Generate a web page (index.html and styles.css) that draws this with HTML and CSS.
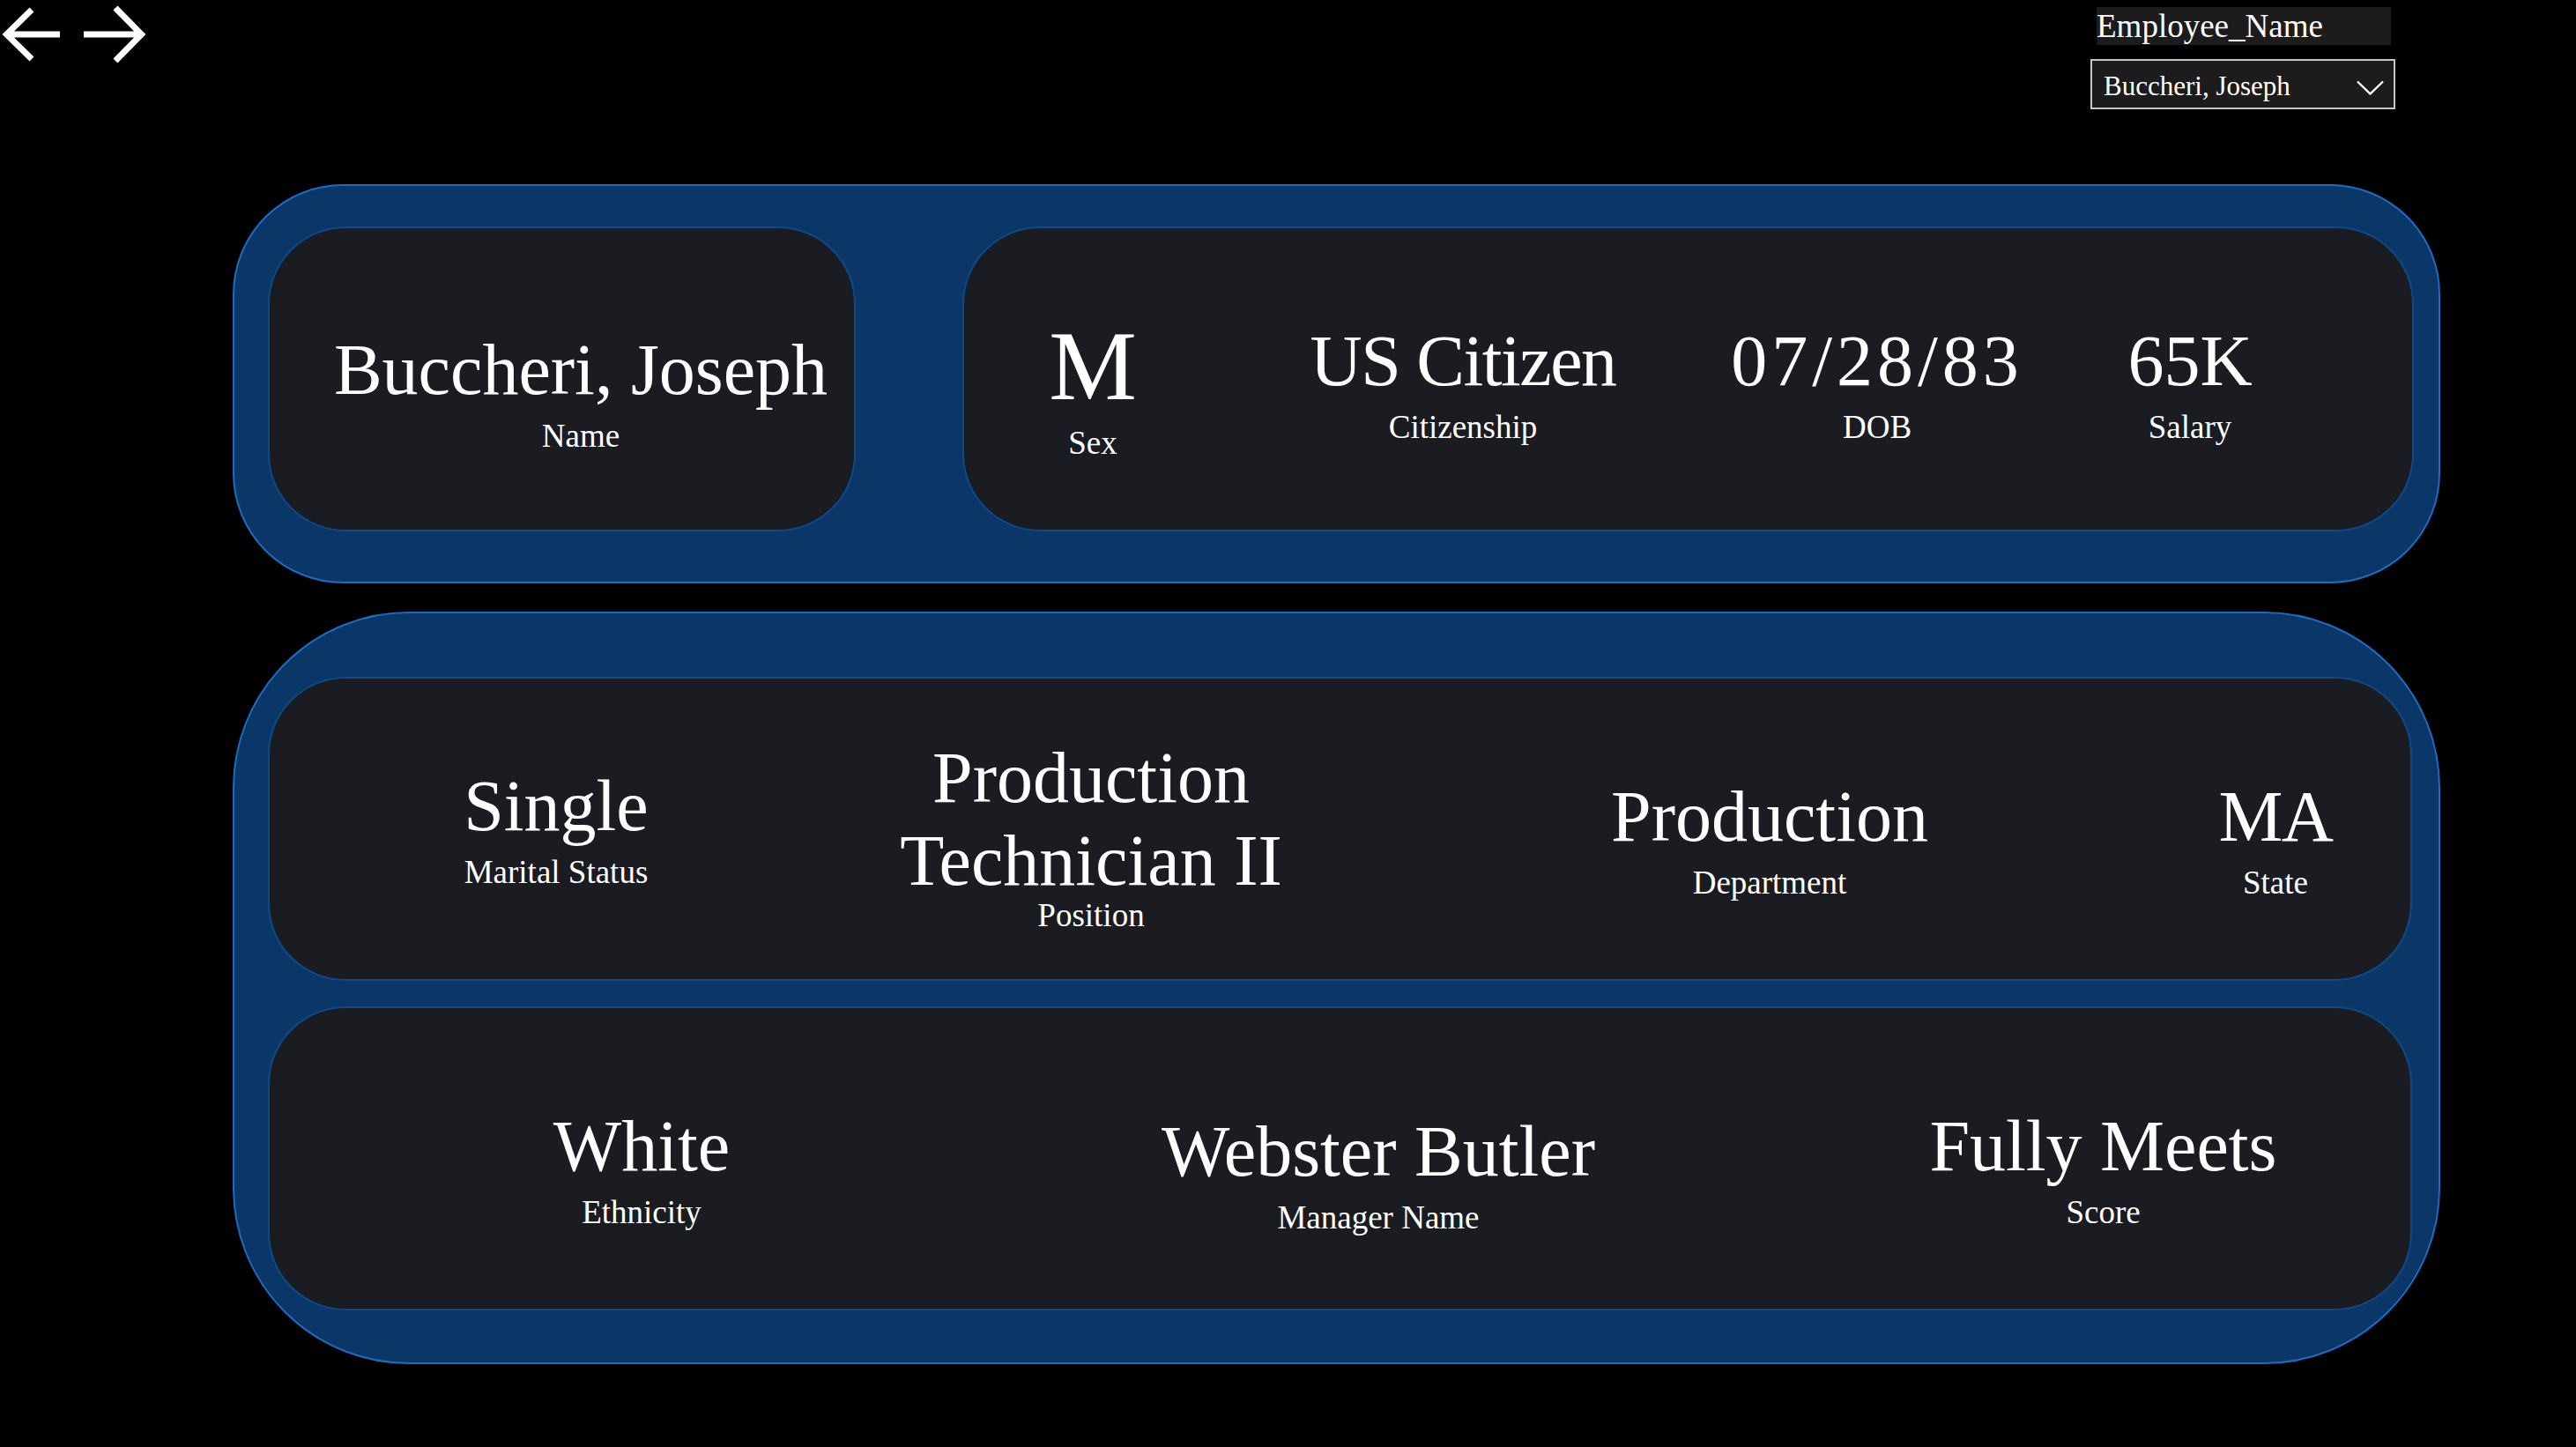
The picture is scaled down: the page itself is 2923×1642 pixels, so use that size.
FILE: index.html
```html
<!DOCTYPE html>
<html lang="en">
<head>
<meta charset="utf-8">
<title>Employee Details</title>
<link rel="stylesheet" href="styles.css">
</head>
<body>
<div class="page">
  <header class="topbar">
    <nav class="nav">
      <svg class="arrow arrow-back" viewBox="0 0 70 70" aria-label="Back">
        <path d="M66 35 H6 M34 7 L5.5 35 L34 63" fill="none" stroke="#fff" stroke-width="7"/>
      </svg>
      <svg class="arrow arrow-fwd" viewBox="0 0 74 70" aria-label="Forward">
        <path d="M3 35 H66 M39 5 L68.5 35 L39 65" fill="none" stroke="#fff" stroke-width="7"/>
      </svg>
    </nav>
    <div class="slicer">
      <div class="slicer-title">Employee_Name</div>
      <div class="slicer-box">
        <span class="slicer-value">Buccheri, Joseph</span>
        <svg class="chevron" viewBox="0 0 31 17"><path d="M1 1.5 L15.5 15.5 L30 1.5" fill="none" stroke="#fff" stroke-width="2.4"/></svg>
      </div>
    </div>
  </header>

  <main class="main">
    <section class="panel panel-top">
      <div class="card card-name">
        <div class="stat">
          <div class="value">Buccheri, Joseph</div>
          <div class="label">Name</div>
        </div>
      </div>
      <div class="card card-info">
        <div class="stat stat-sex">
          <div class="value value-xl">M</div>
          <div class="label label-xl">Sex</div>
        </div>
        <div class="stat">
          <div class="value value-tight">US Citizen</div>
          <div class="label">Citizenship</div>
        </div>
        <div class="stat">
          <div class="value value-date">07/28/83</div>
          <div class="label">DOB</div>
        </div>
        <div class="stat">
          <div class="value">65K</div>
          <div class="label">Salary</div>
        </div>
      </div>
    </section>

    <section class="panel panel-bottom">
      <div class="card card-row card-row1">
        <div class="stat">
          <div class="value">Single</div>
          <div class="label">Marital Status</div>
        </div>
        <div class="stat stat-position">
          <div class="value value-wrap">Production Technician II</div>
          <div class="label label-tight">Position</div>
        </div>
        <div class="stat nudge">
          <div class="value">Production</div>
          <div class="label">Department</div>
        </div>
        <div class="stat nudge">
          <div class="value value-tight">MA</div>
          <div class="label">State</div>
        </div>
      </div>
      <div class="card card-row card-row2">
        <div class="stat">
          <div class="value">White</div>
          <div class="label">Ethnicity</div>
        </div>
        <div class="stat nudge-sm">
          <div class="value">Webster Butler</div>
          <div class="label">Manager Name</div>
        </div>
        <div class="stat stat-score">
          <div class="value">Fully Meets</div>
          <div class="label">Score</div>
        </div>
      </div>
    </section>
  </main>
</div>
</body>
</html>
```

FILE: styles.css
```css
html, body {
  margin: 0;
  padding: 0;
  background: #000;
}

body {
  font-family: "Liberation Serif", "Times New Roman", serif;
  color: #fff;
}

.page {
  width: 2923px;
  min-height: 1642px;
}

/* ---------- top bar ---------- */
.topbar {
  display: flex;
  justify-content: space-between;
  align-items: flex-start;
  height: 209px;
}

.nav {
  display: flex;
  gap: 20px;
  padding: 4px 0 0 2px;
}

.arrow {
  display: block;
  height: 70px;
}

.arrow-back { width: 70px; }
.arrow-fwd { width: 74px; }

.slicer {
  width: 346px;
  margin-right: 205px;
  padding-top: 8px;
}

.slicer-title {
  margin-left: 7px;
  width: 334px;
  height: 43px;
  line-height: 43px;
  background: #1c1c1c;
  font-size: 37px;
  white-space: nowrap;
}

.slicer-box {
  margin-top: 16px;
  height: 53px;
  border: 2px solid #c6c6c6;
  background: #1c1c1c;
  display: flex;
  align-items: flex-start;
  padding-left: 13px;
}

.slicer-value {
  font-size: 31px;
  line-height: 48px;
  padding-top: 5px;
  white-space: nowrap;
}

.chevron {
  width: 31px;
  height: 17px;
  margin-left: auto;
  margin-right: 11px;
  margin-top: 22px;
}

/* ---------- panels ---------- */
.main {
  display: flex;
  flex-direction: column;
  gap: 32px;
  padding-left: 264px;
  width: 2505px;
}

.panel {
  box-sizing: border-box;
  background: #0a3767;
  border: 2px solid #1d6cc2;
}

.panel-top {
  height: 453px;
  border-radius: 125px;
  display: flex;
  gap: 121px;
  padding: 46px 28px 57px 38px;
}

.panel-bottom {
  height: 854px;
  border-radius: 200px;
  display: flex;
  flex-direction: column;
  gap: 29px;
  padding: 72px 30px 59px 38px;
}

.card {
  box-sizing: border-box;
  background: #1a1c21;
  border: 2px solid #0e4a88;
  border-radius: 88px;
}

.card-name {
  width: 667px;
  display: flex;
  align-items: center;
  justify-content: center;
  padding: 32px 0 0 43px;
}

.card-info {
  flex: 1;
  display: grid;
  grid-template-columns: 292px 548px 392px 318px;
  align-items: center;
  padding-top: 12px;
}

.card-row {
  height: 345px;
  display: grid;
  align-items: center;
}

.card-row1 {
  grid-template-columns: 650px 564px 976px 172px;
}

.card-row2 {
  grid-template-columns: 844px 828px 1fr;
  padding-top: 24px;
}

/* ---------- stats ---------- */
.stat {
  text-align: center;
}

.value {
  font-size: 82px;
  line-height: 82px;
  white-space: nowrap;
}

.value-tight {
  letter-spacing: -1.5px;
}

.value-date {
  letter-spacing: 5px;
}

.label {
  font-size: 37px;
  line-height: 37px;
  margin-top: 15px;
  white-space: nowrap;
}

.value-xl {
  font-size: 112px;
  line-height: 116px;
}

.label-xl {
  margin-top: 11px;
}

.stat-sex {
  padding-top: 6px;
}

.value-wrap {
  white-space: normal;
  line-height: 94px;
}

.label-tight {
  margin-top: -4px;
}

.stat-position {
  padding-top: 12px;
}

.nudge {
  padding-top: 24px;
}

.nudge-sm {
  padding-top: 12px;
}

.stat-score {
  padding-left: 60px;
}
```
